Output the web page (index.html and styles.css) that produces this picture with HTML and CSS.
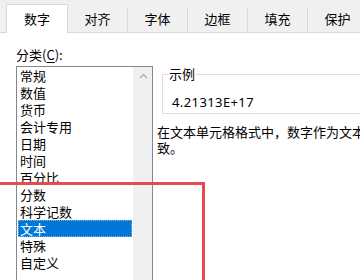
FILE: index.html
```html
<!DOCTYPE html>
<html lang="zh-CN">
<head>
    <meta charset="UTF-8">
    <title>设置单元格格式</title>
    <link rel="stylesheet" href="styles.css">
</head>
<body>
    <div class="tabs">
        <div class="tab active">数字</div>
        <div class="tab">对齐</div>
        <div class="tab">字体</div>
        <div class="tab">边框</div>
        <div class="tab">填充</div>
        <div class="tab">保护</div>
    </div>

    <div class="panel">
        <div class="label">分类(<u>C</u>):</div>
        <div class="row">
            <div class="list-box">
                <ul class="list">
                    <li>常规</li>
                    <li>数值</li>
                    <li>货币</li>
                    <li>会计专用</li>
                    <li>日期</li>
                    <li>时间</li>
                    <li>百分比</li>
                    <li>分数</li>
                    <li>科学记数</li>
                    <li class="selected">文本</li>
                    <li>特殊</li>
                    <li>自定义</li>
                </ul>
                <div class="scrollbar">
                    <svg class="arrow" width="9" height="6" viewBox="0 0 9 6">
                        <path d="M1 5 L4.5 1.5 L8 5" fill="none" stroke="#a6a6a6" stroke-width="1.2"/>
                    </svg>
                </div>
            </div>

            <div class="side">
                <fieldset class="sample">
                    <legend>示例</legend>
                    <div class="sample-value">4.21313E+17</div>
                </fieldset>
                <p class="desc">在文本单元格格式中，数字作为文本处理。单元格显示的内容与输入的内容完全一致。</p>
            </div>
        </div>
    </div>

    <div class="mark"></div>
</body>
</html>
```

FILE: styles.css
```css
html, body {
    margin: 0;
    width: 360px;
    height: 280px;
    overflow: hidden;
}
body {
    position: relative;
    background: #fff;
    color: #000;
    font-family: "Noto Sans CJK SC", "Noto Sans", sans-serif;
    font-size: 13px;
}
.tabs {
    display: flex;
    align-items: flex-end;
    height: 32px;
    padding-left: 6px;
    background: #f0f0f0;
    border-bottom: 1px solid #d9d9d9;
}
.tab {
    flex: none;
    width: 60px;
    height: 25px;
    line-height: 24px;
    text-align: center;
    border-right: 1px solid #d9d9d9;
    box-sizing: border-box;
}
.tab.active {
    width: 62px;
    height: 29px;
    line-height: 28px;
    margin-bottom: -1px;
    background: #fff;
    border: 1px solid #d9d9d9;
    border-bottom: none;
}
.panel {
    padding: 14px 0 0 16px;
}
.label {
    line-height: 16px;
    height: 16px;
    margin-bottom: 3px;
}
.label u {
    text-decoration-thickness: 1px;
    text-underline-offset: 2px;
}
.row {
    display: flex;
    gap: 4px;
}
.list-box {
    flex: none;
    display: flex;
    width: 137px;
    height: 240px;
    box-sizing: border-box;
    border: 1px solid #828790;
}
.list {
    flex: 1;
    list-style: none;
    margin: 0;
    padding: 0 1px;
}
.list li {
    height: 17px;
    line-height: 17px;
    padding-left: 2px;
    white-space: nowrap;
}
.list li.selected {
    background: #0078d7;
    color: #fff;
    outline: 1px dotted #7fb4e6;
    outline-offset: -1px;
}
.scrollbar {
    flex: none;
    width: 18px;
    background: #f0f0f0;
    border-left: 1px solid #f0f0f0;
    display: flex;
    justify-content: center;
}
.arrow {
    margin-top: 6px;
}
.side {
    flex: none;
    width: 472px;
}
.sample {
    margin: 0 0 0 5px;
    padding: 0 0 5px 9px;
    height: 48px;
    box-sizing: border-box;
    border: 1px solid #dcdcdc;
}
.sample legend {
    padding: 0 1px;
    margin-left: -4px;
    line-height: 16px;
}
.sample-value {
    margin-top: 12px;
    font-family: "Noto Sans", sans-serif;
    font-size: 13px;
    letter-spacing: 0.4px;
    line-height: 16px;
}
.desc {
    margin: 10px 0 0;
    line-height: 16px;
}
.mark {
    position: absolute;
    left: -10px;
    top: 182px;
    width: 215px;
    height: 200px;
    box-sizing: border-box;
    border: 3px solid #e84a4f;
}
```
